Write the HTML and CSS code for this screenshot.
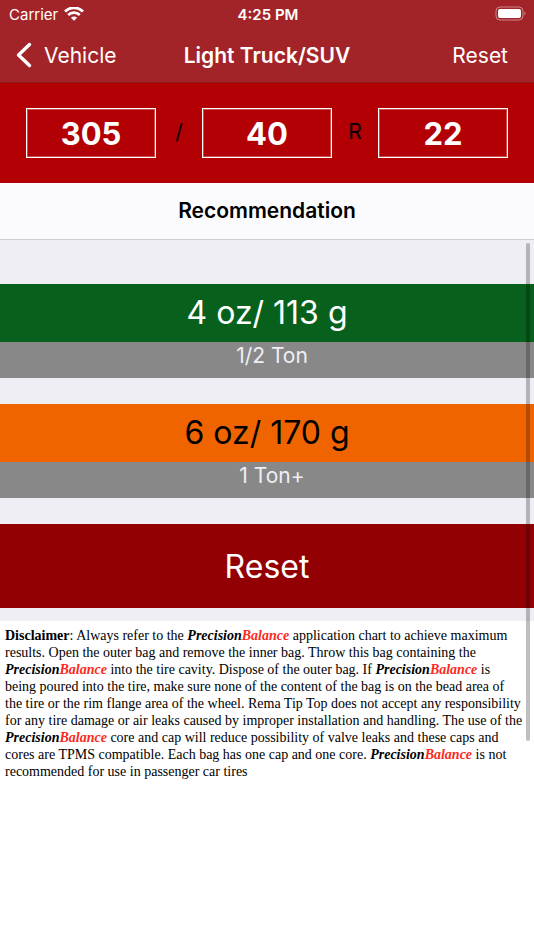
FILE: index.html
```html
<!DOCTYPE html>
<html lang="en">
<head>
    <meta charset="UTF-8">
    <meta name="viewport" content="width=device-width, initial-scale=1.0">
    <title>Light Truck/SUV - Recommendation</title>
    <link rel="stylesheet" href="styles.css">
</head>
<body>
    <header>
        <div class="status-bar">
            <div class="carrier">
                <span>Carrier</span>
                <svg width="20" height="15" viewBox="0 0 20 15" fill="none" stroke="#fff">
                    <path d="M1 4.6 C6 -.5 14 -.5 19 4.6" stroke-width="2.8"/>
                    <path d="M4.2 8 C7.4 4.8 12.6 4.8 15.8 8" stroke-width="2.7"/>
                    <path d="M10 13.8 L6.9 10.7 C8.6 9 11.4 9 13.1 10.7 Z" fill="#fff" stroke="none"/>
                </svg>
            </div>
            <span class="clock">4:25 PM</span>
            <div class="battery">
                <svg width="32" height="16" viewBox="0 0 32 16">
                    <rect x="1" y="1" width="27" height="13" rx="4" fill="none" stroke="#fff" stroke-opacity=".45"/>
                    <rect x="3" y="3" width="23" height="9" rx="2" fill="#fff"/>
                    <path d="M29.5 5.5 Q31.4 7.5 29.5 9.5 Z" fill="#fff" fill-opacity=".55"/>
                </svg>
            </div>
        </div>
        <nav class="nav-bar">
            <a class="back" href="#vehicle">
                <svg width="16" height="26" viewBox="0 0 16 26" fill="none" stroke="#fff" stroke-width="3.4" stroke-linecap="round" stroke-linejoin="round">
                    <path d="M13.5 2.5 L2.5 13 L13.5 23.5"/>
                </svg>
                Vehicle
            </a>
            <h1>Light Truck/SUV</h1>
            <button type="button" class="nav-reset">Reset</button>
        </nav>
    </header>

    <form class="tire-size">
        <input type="text" id="width" aria-label="Width" value="305">
        <span>/</span>
        <input type="text" id="ratio" aria-label="Aspect ratio" value="40">
        <span>R</span>
        <input type="text" id="rim" aria-label="Rim diameter" value="22">
    </form>

    <h2>Recommendation</h2>

    <main>
        <section class="results">
            <div class="result">
                <div class="amount green">4 oz/ 113 g</div>
                <div class="load">1/2 Ton</div>
            </div>
            <div class="result">
                <div class="amount orange">6 oz/ 170 g</div>
                <div class="load">1 Ton+</div>
            </div>
            <button type="button" class="reset">Reset</button>
        </section>

        <p class="disclaimer"><b>Disclaimer</b>: Always refer to the <b class="brand">Precision<span>Balance</span></b> application chart to achieve maximum results. Open the outer bag and remove the inner bag. Throw this bag containing the <b class="brand">Precision<span>Balance</span></b> into the tire cavity. Dispose of the outer bag. If <b class="brand">Precision<span>Balance</span></b> is being poured into the tire, make sure none of the content of the bag is on the bead area of the tire or the rim flange area of the wheel. Rema Tip Top does not accept any responsibility for any tire damage or air leaks caused by improper installation and handling. The use of the <b class="brand">Precision<span>Balance</span></b> core and cap will reduce possibility of valve leaks and these caps and cores are TPMS compatible. Each bag has one cap and one core. <b class="brand">Precision<span>Balance</span></b> is not recommended for use in passenger car tires</p>
        <div class="scroll-thumb"></div>
    </main>
</body>
</html>
```

FILE: styles.css
```css
* {
    box-sizing: border-box;
}

body {
    margin: 0;
    background: #fff;
    font-family: Inter, "Liberation Sans", sans-serif;
    font-size: 21px;
    color: #000;
}

/* Header */
header {
    background: #a32428;
    color: #fff;
}

.status-bar {
    display: grid;
    grid-template-columns: 1fr auto 1fr;
    align-items: center;
    height: 28px;
    padding: 0 7px 0 9px;
    font-size: 15px;
}

.carrier {
    display: flex;
    align-items: center;
    gap: 6px;
}

.clock {
    font-weight: 600;
}

.battery {
    display: flex;
    justify-content: flex-end;
}

.nav-bar {
    display: grid;
    grid-template-columns: 1fr auto 1fr;
    align-items: center;
    height: 55px;
    padding: 0 16px;
    border-bottom: 1px solid #8e1a1c;
}

.back {
    display: flex;
    align-items: center;
    gap: 12px;
    color: #fff;
    text-decoration: none;
}

h1 {
    margin: 0;
    font-size: 21px;
    font-weight: 600;
}

button {
    border: none;
    color: #fff;
    font-family: inherit;
    cursor: pointer;
}

.nav-reset {
    justify-self: end;
    margin-right: 10px;
    padding: 0;
    background: none;
    font-size: 21px;
}

/* Tire size */
.tire-size {
    display: flex;
    align-items: center;
    height: 100px;
    padding: 0 26px;
    background: #b20004;
}

.tire-size input {
    flex: 1;
    min-width: 0;
    height: 50px;
    padding: 0;
    border: 1px solid #fff;
    border-radius: 0;
    box-shadow: inset 0 0 0 1px rgba(255, 255, 255, 0.3);
    background: none;
    color: #fff;
    font-family: inherit;
    font-size: 31px;
    font-weight: 700;
    text-align: center;
}

.tire-size span {
    width: 46px;
    padding-bottom: 4px;
    text-align: center;
}

h2 {
    margin: 0;
    background: #fbfbfd;
    border-bottom: 1px solid #d0d0d4;
    font-size: 21px;
    font-weight: 600;
    line-height: 56px;
    text-align: center;
}

/* Results */
main {
    position: relative;
}

.results {
    padding: 44px 0 13px;
    background: #efeef4;
}

.result {
    margin-bottom: 26px;
    text-align: center;
}

.amount {
    font-size: 32px;
    line-height: 58px;
}

.green {
    background: #07611d;
    color: #fff;
}

.orange {
    background: #f06400;
}

.load {
    height: 36px;
    padding-left: 10px;
    background: #888;
    color: #efeef4;
    line-height: 28px;
}

.reset {
    display: block;
    width: 100%;
    height: 84px;
    background: #930004;
    font-size: 32px;
}

.disclaimer {
    margin: 0;
    padding: 6px 10px 6px 5px;
    font-family: "Liberation Serif", serif;
    font-size: 14px;
    line-height: 17px;
}

.brand {
    font-style: italic;
}

.brand span {
    color: #fb2a20;
}

.scroll-thumb {
    position: absolute;
    top: 3px;
    right: 4px;
    width: 4px;
    height: 498px;
    border-radius: 2px;
    background: rgba(0, 0, 0, 0.25);
}
```
